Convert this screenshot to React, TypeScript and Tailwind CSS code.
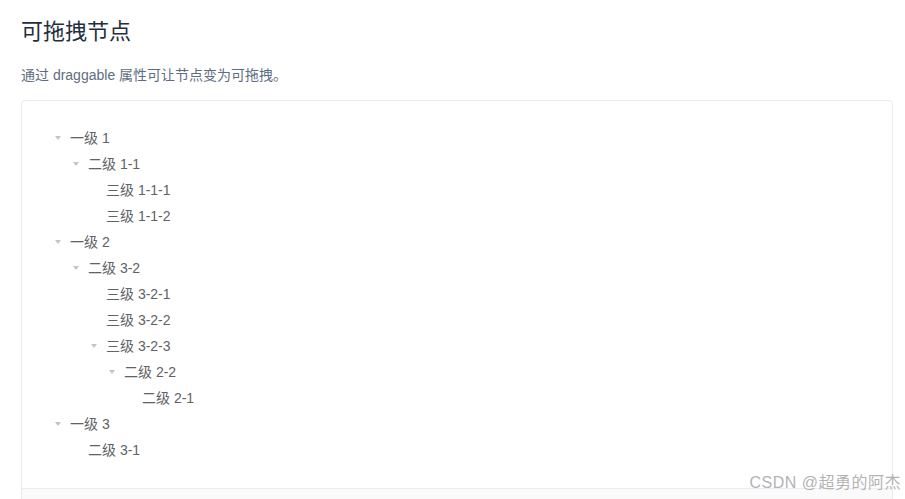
type Node = { label: string; children?: Node[] };

const data: Node[] = [
  {
    label: '一级 1',
    children: [{ label: '二级 1-1', children: [{ label: '三级 1-1-1' }, { label: '三级 1-1-2' }] }],
  },
  {
    label: '一级 2',
    children: [
      {
        label: '二级 3-2',
        children: [
          { label: '三级 3-2-1' },
          { label: '三级 3-2-2' },
          {
            label: '三级 3-2-3',
            children: [{ label: '二级 2-2', children: [{ label: '二级 2-1' }] }],
          },
        ],
      },
    ],
  },
  { label: '一级 3', children: [{ label: '二级 3-1' }] },
];

const TreeNode = ({ node, level }: { node: Node; level: number }) => {
  const hasKids = !!node.children && node.children.length > 0;
  return (
    <div>
      <div className="flex items-center h-[26px]" style={{ paddingLeft: level * 18 }}>
        <span className="w-6 h-6 flex items-center justify-center flex-shrink-0">
          {hasKids && (
            <span className="block w-0 h-0 border-l-[3.5px] border-r-[3.5px] border-t-[4px] border-l-transparent border-r-transparent border-t-[#c0c4cc]" />
          )}
        </span>
        <span className="text-[14px] text-[#606266]">{node.label}</span>
      </div>
      {hasKids && node.children!.map((c) => <TreeNode key={c.label} node={c} level={level + 1} />)}
    </div>
  );
};

export default function App() {
  return (
    <div
      className="relative h-[499px] overflow-hidden bg-white px-[21px]"
      style={{ fontFamily: '"Liberation Sans", "Noto Sans CJK SC", sans-serif' }}
    >
      <h3 className="mt-[17px] text-[22px] leading-[30px] font-normal text-[#1f2f3d]">可拖拽节点</h3>
      <p className="mt-[17px] text-[14px] leading-[22px] text-[#5e6d82]">
        通过 draggable 属性可让节点变为可拖拽。
      </p>
      <div className="mt-[14px] w-[872px] border border-[#ebebeb] rounded-[4px]">
        <div className="px-6 pt-[24px] pb-[25px]">
          {data.map((n) => (
            <TreeNode key={n.label} node={n} level={0} />
          ))}
        </div>
        <div className="h-10 border-t border-[#eaeefb] bg-[#fafafa]" />
      </div>
      <div className="absolute right-[4px] bottom-[5px] text-[16px] leading-[22px] tracking-[0.5px] text-[#b3b3b3]">
        CSDN @超勇的阿杰
      </div>
    </div>
  );
}
